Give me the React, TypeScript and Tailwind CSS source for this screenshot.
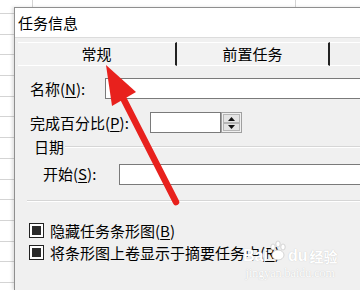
import React from "react";

const font = "font-['Noto_Sans_CJK_SC','Noto_Sans',sans-serif]";

function Key({ k }: { k: string }) {
  return (
    <span>
      (<span className="underline underline-offset-2">{k}</span>)
    </span>
  );
}

function TextBox({ className = "" }: { className?: string }) {
  return <div className={`h-[21px] border border-[#7a7a7a] bg-white ${className}`} />;
}

function Spinner() {
  return (
    <div className="flex h-[21px] w-[21px] flex-col border border-[#a0a0a0] bg-[#f0f0f0] p-px">
      <div className="flex flex-1 items-center justify-center border border-[#b5b5b5] bg-[#e4e4e4]">
        <svg width="7" height="4" viewBox="0 0 7 4">
          <path d="M0 4 L3.5 0 L7 4 Z" fill="#111" />
        </svg>
      </div>
      <div className="flex flex-1 items-center justify-center border border-[#b5b5b5] bg-[#e4e4e4]">
        <svg width="7" height="4" viewBox="0 0 7 4">
          <path d="M0 0 L3.5 4 L7 0 Z" fill="#111" />
        </svg>
      </div>
    </div>
  );
}

function CheckBox({ label }: { label: React.ReactNode }) {
  return (
    <div className="flex h-[15px] items-center">
      <div className="ml-[14px] flex h-[15px] w-[15px] items-center justify-center border border-[#222] bg-white">
        <div className="h-[9px] w-[9px] bg-[#2b2b2b]" />
      </div>
      <div className="ml-[6px] whitespace-nowrap text-[15px] leading-[15px] text-black">{label}</div>
    </div>
  );
}

// 左侧表格的网格线
function SheetStrip() {
  const rows = Array.from({ length: 13 });
  return (
    <div className="flex w-[14px] shrink-0 flex-col">
      <div className="h-[14px] shrink-0 border-b border-[#d4d4d4]" />
      {rows.map((_, i) => (
        <div key={i} className="h-[20.7px] shrink-0 border-b border-[#d4d4d4]" />
      ))}
    </div>
  );
}

export default function App() {
  return (
    <div className={`relative flex h-[290px] w-[360px] overflow-hidden bg-white ${font}`}>
      <SheetStrip />

      <div className="flex flex-col">
        {/* 顶部网格 */}
        <div className="flex h-[7px] shrink-0">
          <div className="w-[19px] border-r border-[#d4d4d4]" />
          <div className="w-[263px] border-r border-[#d4d4d4]" />
        </div>

        {/* 对话框 */}
        <div className="flex w-[380px] flex-1 flex-col border-l border-t border-[#8f8f8f] bg-[#f0f0f0] shadow-[-2px_0_3px_rgba(0,0,0,0.12)]">
          <div className="flex h-[29px] shrink-0 items-center bg-white pl-[3px] pt-[2px] text-[15px] text-black">
            任务信息
          </div>

          {/* 选项卡 */}
          <div className="flex h-[30px] shrink-0 items-start border-t border-[#dcdcdc] bg-[#f0f0f0] pl-[3px]">
            <div className="mt-[4px] flex h-[24px] w-[159px] items-center justify-center border-y border-r-2 border-y-white border-r-[#222] bg-[#f2f2f2] text-[15px] text-black">
              常规
            </div>
            <div className="mt-[4px] flex h-[24px] w-[153px] items-center justify-center border-y border-r-2 border-y-white border-r-[#222] bg-[#f2f2f2] text-[15px] text-black">
              前置任务
            </div>
            <div className="mt-[4px] h-[24px] flex-1 border-y border-white" />
          </div>

          <div className="flex flex-col text-[15px] text-black">
            <div className="mt-[9px] flex items-center pl-[15px]">
              <div className="w-[75px] whitespace-nowrap pt-[2px]">
                名称<Key k="N" />:
              </div>
              <TextBox className="flex-1" />
            </div>

            <div className="mt-[11px] flex items-center pl-[15px]">
              <div className="w-[120px] whitespace-nowrap">
                完成百分比<Key k="P" />:
              </div>
              <TextBox className="w-[71px]" />
              <Spinner />
            </div>

            <div className="mt-[6px] flex h-[14px] items-center pl-[19px]">
              <div className="leading-[14px]">日期</div>
              <div className="ml-[1px] flex-1 border-b border-t border-b-white border-t-[#d6d6d6]" />
            </div>

            <div className="mt-[9px] flex items-center pl-[28px]">
              <div className="w-[76px] whitespace-nowrap">
                开始<Key k="S" />:
              </div>
              <TextBox className="flex-1" />
            </div>

            <div className="ml-[12px] mt-[14px] border-b border-t border-b-white border-t-[#d6d6d6]" />

            <div className="mt-[21px]">
              <CheckBox label={<>隐藏任务条形图<Key k="B" /></>} />
            </div>
            <div className="mt-[7px]">
              <CheckBox label={<>将条形图上卷显示于摘要任务中<Key k="R" /></>} />
            </div>
          </div>
        </div>
      </div>

      {/* 红色箭头 */}
      <svg className="pointer-events-none absolute left-0 top-0" width="360" height="290" viewBox="0 0 360 290">
        <line x1="176" y1="202" x2="121" y2="94" stroke="#e8211d" strokeWidth="6.5" strokeLinecap="round" />
        <polygon points="106,65 136,92 112,106" fill="#e8211d" />
      </svg>

      {/* 水印 */}
      <div className="pointer-events-none absolute left-[243px] top-[240px] flex flex-col items-center text-white [text-shadow:0_0_1px_#bdbdbd]">
        <div className="flex items-end">
          <span className="font-['Liberation_Sans',sans-serif] text-[16px] font-bold leading-[16px]">Bai</span>
          <svg width="20" height="22" viewBox="0 0 20 22" className="mb-[2px]">
            <g fill="#fff" stroke="#c4c4c4" strokeWidth="0.7">
              <ellipse cx="5" cy="7" rx="2.2" ry="3" />
              <ellipse cx="10" cy="4" rx="2.2" ry="3" />
              <ellipse cx="15" cy="7" rx="2.2" ry="3" />
              <ellipse cx="10" cy="15" rx="6" ry="5" />
            </g>
          </svg>
          <span className="font-['Liberation_Sans',sans-serif] text-[16px] font-bold leading-[16px]">du</span>
          <span className="ml-[2px] text-[14px] font-bold leading-[16px]">经验</span>
        </div>
        <div className="mt-[3px] font-['Liberation_Serif',serif] text-[12px] leading-[12px]">jingyan.baidu.com</div>
      </div>
    </div>
  );
}
